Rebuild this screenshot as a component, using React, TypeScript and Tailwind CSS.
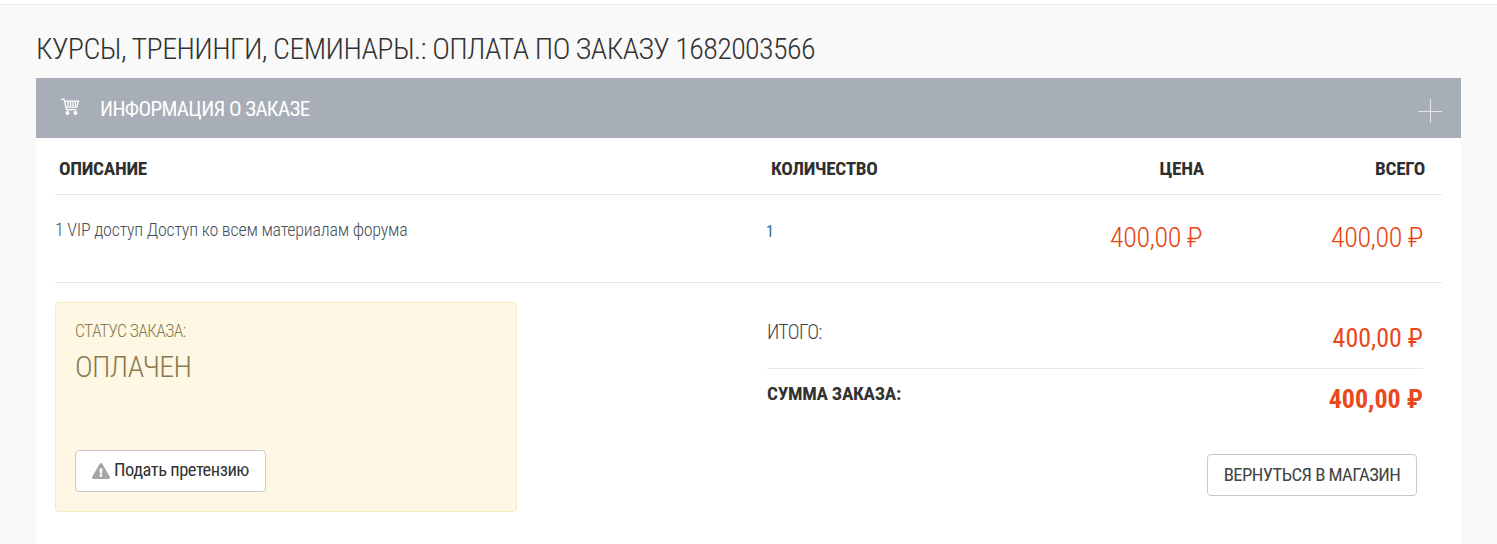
import React from "react";
import { FaExclamationTriangle } from "react-icons/fa";

const Rub = () => <span>₽</span>;

function Cart() {
  return (
    <svg width="20" height="20" viewBox="0 0 20 20" fill="none" stroke="#fff" strokeWidth="1.25">
      <path d="M1 2h3l2.5 10.5h10" />
      <path d="M4.6 4h14l-1.8 6H6" />
      <path d="M8 4.5v5M10.5 4.5v5M13 4.5v5M15.5 4.5v5" />
      <circle cx="7.5" cy="16" r="1.4" fill="#fff" />
      <circle cx="15.5" cy="16" r="1.4" fill="#fff" />
    </svg>
  );
}

export default function App() {
  return (
    <div className="h-[544px] overflow-hidden bg-[#f9f9f9] font-['Roboto',sans-serif] [font-stretch:75%] text-[#333]">
      <div className="h-[5px] bg-white border-b border-[#eeeeee]" />
      <div className="px-[36px]">
        <h1 className="pt-[27px] h-[73px] text-[30px] tracking-[-0.62px] leading-[34px] font-light uppercase text-[#333]">
          Курсы, тренинги, семинары.: Оплата по заказу 1682003566
        </h1>
        <div className="bg-white h-[500px]">
          <div className="h-[60px] bg-[#a7aeb7] flex items-center pl-[24px] pr-[19px] text-white">
            <span className="w-[40px] -mt-[3px]"><Cart /></span>
            <span className="pt-[3px] text-[21px] tracking-[-0.62px] font-normal uppercase">Информация о заказе</span>
            <svg className="ml-auto mt-[5px]" width="24" height="24" viewBox="0 0 24 24" stroke="#e4e6e9" strokeWidth="1">
              <path d="M0 12.5h24M12.5 0v24" />
            </svg>
          </div>
          <div className="mx-[19px]">
            <div className="flex h-[57px] pt-[6px] items-center border-b border-[#e8e8e8] text-[19.2px] tracking-[-0.3px] font-bold uppercase text-[#2f2f2f]">
              <span className="w-[716px] pl-[4px]">Описание</span>
              <span className="w-[200px]">Количество</span>
              <span className="w-[233px] text-right">Цена</span>
              <span className="w-[221px] text-right">Всего</span>
            </div>
            <div className="flex h-[88px] border-b border-[#e8e8e8]">
              <span className="w-[711px] pt-[25px] text-[18px] tracking-[-0.24px] leading-[20px] font-light text-[#4a4f5a]">1 VIP доступ Доступ ко всем материалам форума</span>
              <span className="w-[200px] pt-[27px] text-[16px] leading-[20px] font-normal text-[#2a6a9a]">1</span>
              <span className="w-[236px] pt-[27px] text-right text-[28px] tracking-[-0.45px] leading-[32px] font-light text-[#e8430f]">400,00 <Rub /></span>
              <span className="w-[221px] pt-[27px] text-right text-[28px] tracking-[-0.45px] leading-[32px] font-light text-[#e8430f]">400,00 <Rub /></span>
            </div>
            <div className="flex pt-[19px]">
              <div className="w-[462px] h-[210px] bg-[#fdf7e3] border border-[#f9e9c0] rounded-[4px] pl-[19px] pt-[19px] flex flex-col">
                <div className="text-[17.5px] tracking-[-0.6px] leading-[18px] font-light uppercase text-[#8a7a50]">Статус заказа:</div>
                <div className="mt-[10px] text-[30px] tracking-[-0.7px] leading-[34px] font-light uppercase text-[#8a7a50]">Оплачен</div>
                <button className="mt-[66px] w-[191px] h-[42px] bg-white border border-[#c8c8c8] rounded-[4px] flex items-center justify-center gap-[4px] text-[18.5px] tracking-[-0.5px] font-normal text-[#333]">
                  <FaExclamationTriangle size={18} color="#a6a6a6" />
                  Подать претензию
                </button>
              </div>
              <div className="ml-[250px] w-[656px]">
                <div className="flex justify-between h-[67px] border-b border-[#e8e8e8]">
                  <span className="pt-[19px] text-[20px] tracking-[-0.7px] leading-[22px] font-light uppercase text-[#444]">Итого:</span>
                  <span className="pt-[20px] text-[26px] leading-[32px] font-normal text-[#e8491d]">400,00 <Rub /></span>
                </div>
                <div className="flex justify-between h-[86px]">
                  <span className="pt-[14px] text-[19.2px] tracking-[-0.3px] leading-[22px] font-bold uppercase text-[#333]">Сумма заказа:</span>
                  <span className="pt-[14px] text-[26px] leading-[32px] font-bold text-[#e8491d]">400,00 <Rub /></span>
                </div>
                <div className="flex justify-end pr-[6px] -mt-[1px]">
                  <button className="w-[210px] h-[42px] bg-white border border-[#c8c8c8] rounded-[4px] text-[18.7px] tracking-[-0.6px] uppercase font-normal text-[#444]">Вернуться в магазин</button>
                </div>
              </div>
            </div>
          </div>
        </div>
      </div>
    </div>
  );
}
